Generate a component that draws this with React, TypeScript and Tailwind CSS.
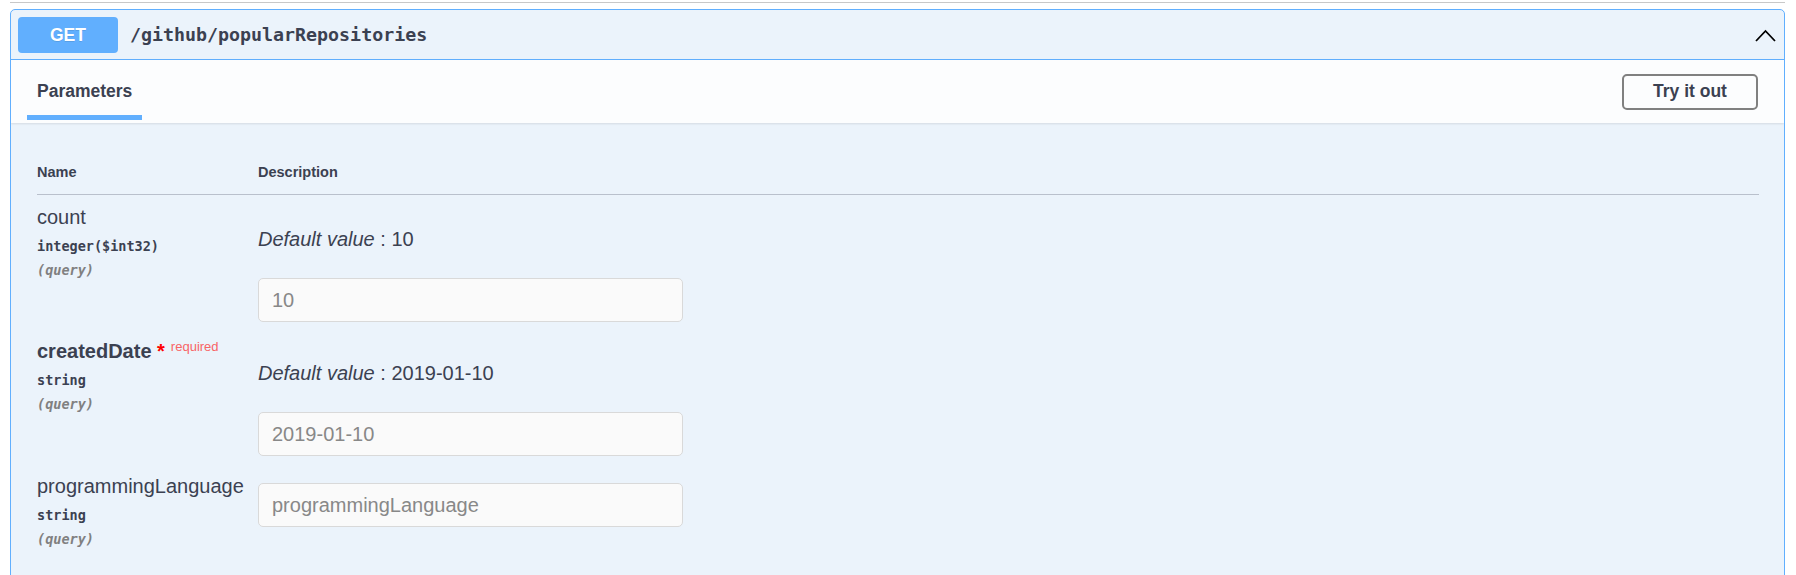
import React from "react";

const sans = "font-['Liberation_Sans',Arial,sans-serif]";
const mono = "font-['DejaVu_Sans_Mono',monospace]";

function ParamName({
  name,
  type,
  required,
}: {
  name: string;
  type: string;
  required?: boolean;
}) {
  return (
    <div className="flex flex-col">
      <div className={`${sans} h-[24px] text-[20px] leading-[24px] text-[#3b4151] whitespace-nowrap ${required ? "font-bold" : ""}`}>
        {name}
        {required && (
          <>
            <span className="text-[#ff0000]"> *</span>
            <span className="relative -top-[7px] pl-[6px] text-[13px] leading-none font-normal text-[#f86466]">required</span>
          </>
        )}
      </div>
      <div className={`${mono} mt-[8px] text-[13.5px] leading-[18px] font-bold text-[#3b4151]`}>{type}</div>
      <div className={`${mono} mt-[6px] text-[13.5px] leading-[18px] font-bold italic text-[#808080]`}>(query)</div>
    </div>
  );
}

function Field({ value, placeholder }: { value?: string; placeholder?: string }) {
  return (
    <input
      readOnly
      value={value ?? ""}
      placeholder={placeholder}
      className={`${sans} block w-[425px] h-[44px] rounded-[5px] border border-[#d9d9d9] bg-[#fafafa] px-[13px] text-[20px] text-[#888888] placeholder:text-[#888888] outline-none`}
    />
  );
}

function DefaultValue({ v }: { v: string }) {
  return (
    <div className={`${sans} mt-[22px] text-[20px] leading-[24px] text-[#3b4151]`}>
      <i>Default value</i> : {v}
    </div>
  );
}

export default function App() {
  return (
    <div className={`bg-white w-[1796px] min-h-[575px] pl-[10px] pr-[11px] ${sans}`}>
      <div className="mt-[2px] h-px bg-[#c8c8c8]" />
      <div className="mt-[6px] rounded-[5px] border border-[#61affe] bg-[#ebf3fb] overflow-hidden">
        {/* summary */}
        <div className="flex items-center pl-[7px] pr-[8px] pt-[7px] pb-[6px] border-b border-[#61affe]">
          <div className="w-[100px] h-[36px] rounded-[4px] bg-[#61affe] flex items-center justify-center text-white font-bold text-[17.5px] [text-shadow:0_1px_0_rgba(0,0,0,0.1)]">
            GET
          </div>
          <div className={`${mono} ml-[12px] text-[18.3px] font-bold text-[#3b4151]`}>/github/popularRepositories</div>
          <div className="flex-1" />
          <svg width="21" height="13" viewBox="0 0 21 13" className="block">
            <polyline points="1,12 10.5,2 20,12" fill="none" stroke="#000" strokeWidth="1.8" />
          </svg>
        </div>

        {/* section header */}
        <div className="flex items-center justify-between h-[63px] bg-white/85 shadow-[0_1px_2px_rgba(0,0,0,0.1)] pl-[16px] pr-[26px]">
          <div className="self-end mb-[3px] px-[10px] pb-[13px] border-b-[5px] border-[#61affe]">
            <span className="block text-[17.5px] leading-[21px] font-bold text-[#3b4151]">Parameters</span>
          </div>
          <button className="w-[136px] h-[36px] rounded-[5px] border-2 border-[#808080] bg-transparent text-[17.5px] font-bold text-[#3b4151]">
            Try it out
          </button>
        </div>

        {/* parameters */}
        <div className="pt-[40px] pl-[26px] pr-[25px] pb-[40px]">
          <div className="grid grid-cols-[221px_1fr] border-b border-[#b9c0cc] pb-[13px]">
            <div className="text-[14.5px] leading-[18px] font-bold text-[#3b4151]">Name</div>
            <div className="text-[14.5px] leading-[18px] font-bold text-[#3b4151]">Description</div>
          </div>

          <div className="grid grid-cols-[221px_1fr] pt-[10px] pb-[17px]">
            <ParamName name="count" type="integer($int32)" />
            <div>
              <DefaultValue v="10" />
              <div className="mt-[27px]">
                <Field value="10" />
              </div>
            </div>
          </div>

          <div className="grid grid-cols-[221px_1fr] pb-[18px]">
            <ParamName name="createdDate" type="string" required />
            <div>
              <DefaultValue v="2019-01-10" />
              <div className="mt-[27px]">
                <Field value="2019-01-10" />
              </div>
            </div>
          </div>

          <div className="grid grid-cols-[221px_1fr]">
            <ParamName name="programmingLanguage" type="string" />
            <div className="pt-[9px]">
              <Field placeholder="programmingLanguage" />
            </div>
          </div>
        </div>
      </div>
    </div>
  );
}
